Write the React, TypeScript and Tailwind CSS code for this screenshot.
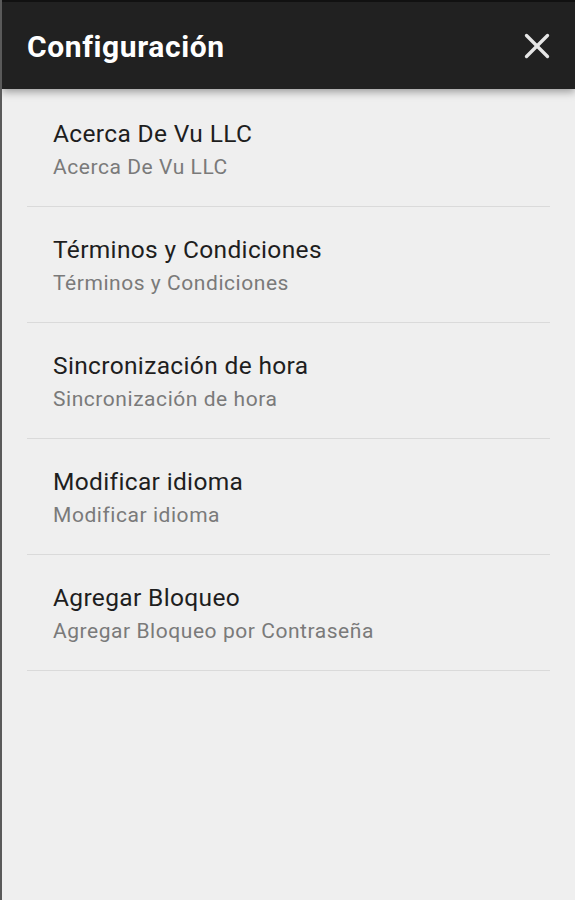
import { X } from "lucide-react";

const items = [
  { title: "Acerca De Vu LLC", sub: "Acerca De Vu LLC" },
  { title: "Términos y Condiciones", sub: "Términos y Condiciones" },
  { title: "Sincronización de hora", sub: "Sincronización de hora" },
  { title: "Modificar idioma", sub: "Modificar idioma" },
  { title: "Agregar Bloqueo", sub: "Agregar Bloqueo por Contraseña" },
];

export default function App() {
  return (
    <div
      className="w-[575px] h-[900px] bg-[#efefef] border-l-[2px] border-[#5a5a5a] flex flex-col overflow-hidden"
      style={{ fontFamily: "Roboto, 'Noto Sans', sans-serif" }}
    >
      {/* Header */}
      <div className="h-[89px] bg-[#212121] border-t-[2px] border-[#111] flex items-center justify-between pl-[25px] pr-[17px] shadow-[0_3px_8px_rgba(0,0,0,0.35)] relative z-10">
        <h1 className="text-white text-[30px] font-bold tracking-[0.6px] mt-[2px]">Configuración</h1>
        <X className="w-[42px] h-[42px] text-[#e6e6e6]" strokeWidth={1.9} />
      </div>

      {/* List */}
      <div className="px-[25px] pt-[2px]">
        {items.map((item) => (
          <div key={item.title} className="border-b border-[#dadada] pl-[26px] pt-[28px] pb-[26px]">
            <p className="text-[24.5px] leading-[30px] text-[#1e1e1e] tracking-[0.35px]">{item.title}</p>
            <p className="mt-[5px] text-[21px] leading-[26px] text-[#7a7a7a] tracking-[0.55px]">{item.sub}</p>
          </div>
        ))}
      </div>
    </div>
  );
}
